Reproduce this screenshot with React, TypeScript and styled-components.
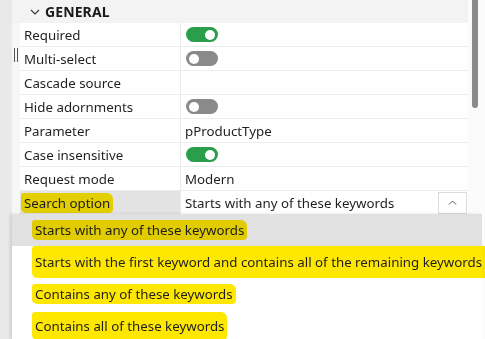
import React from "react";
import styled, { createGlobalStyle } from "styled-components";

const Global = createGlobalStyle`
  html, body { margin: 0; padding: 0; background: #fff; }
  body { font-family: "Noto Sans", "Open Sans", sans-serif; color: #1f1f1f; }
`;

const Page = styled.div`
  position: relative;
  width: 485px;
  height: 339px;
  overflow: hidden;
  display: flex;
  background: #fff;
`;

const LeftRail = styled.div`
  width: 12px;
  flex: none;
  background: #e9e9e9;
`;

const Content = styled.div`
  width: 456px;
  flex: none;
  background: #f7f7f7;
  display: flex;
  flex-direction: column;
`;

const ScrollTrack = styled.div`
  width: 17px;
  flex: none;
  background: #fbfbfb;
  padding-left: 4px;
  box-sizing: border-box;
`;

const ScrollThumb = styled.div`
  width: 6px;
  height: 108px;
  background: #8b8b8b;
  border-radius: 0 0 3px 3px;
`;

const Header = styled.div`
  height: 23px;
  background: #f3f3f3;
  display: flex;
  align-items: center;
  padding-left: 18px;
  gap: 5px;
  font-size: 14px;
  font-weight: 700;
  letter-spacing: 0.1px;
  color: #1a1a1a;
`;

const Row = styled.div`
  margin-left: 8px;
  height: 24px;
  display: grid;
  grid-template-columns: 161px 1fr;
  box-sizing: border-box;
  border-bottom: 1px solid #ececec;
  background: #fff;
`;

const Label = styled.div<{ $selected?: boolean }>`
  display: flex;
  align-items: center;
  padding-left: 4px;
  font-size: 13.3px;
  background: ${(p) => (p.$selected ? "#e3e3e3" : "#fff")};
  border-right: 1px solid #ececec;
`;

const Value = styled.div`
  display: flex;
  align-items: center;
  padding-left: 4px;
  font-size: 13.3px;
  justify-content: space-between;
`;

const Toggle = styled.div<{ $on: boolean }>`
  width: 32px;
  height: 15px;
  border-radius: 8px;
  margin-left: 1px;
  background: ${(p) => (p.$on ? "#2a9e4b" : "#8a8a8a")};
  position: relative;
  &::after {
    content: "";
    position: absolute;
    top: 2.5px;
    left: ${(p) => (p.$on ? "19px" : "3px")};
    width: 10px;
    height: 10px;
    border-radius: 50%;
    background: #fff;
  }
`;

const SelectButton = styled.div`
  width: 29px;
  height: 22px;
  box-sizing: border-box;
  border: 1px solid #dcdcdc;
  background: #fff;
  display: flex;
  align-items: center;
  justify-content: center;
  margin-right: 1px;
`;

const Marker = styled.span<{ $pad?: string }>`
  background: #ffe800;
  mix-blend-mode: multiply;
  padding: ${(p) => p.$pad || "1px 3px"};
  border-radius: 3px 6px 4px 5px;
  margin-left: -3px;
`;

const Grip = styled.div`
  position: absolute;
  left: 14px;
  top: 48px;
  width: 4px;
  height: 14px;
  border-left: 1.5px solid #555;
  border-right: 1.5px solid #555;
  box-sizing: border-box;
`;

const Menu = styled.div`
  position: absolute;
  left: 12px;
  top: 214px;
  width: 470px;
  height: 125px;
  background: #fff;
  box-shadow: -2px 0 3px rgba(0, 0, 0, 0.12);
  display: flex;
  flex-direction: column;
`;

const MenuItem = styled.div<{ $active?: boolean }>`
  height: 32px;
  flex: none;
  display: flex;
  align-items: center;
  padding-left: 23px;
  font-size: 13.3px;
  white-space: nowrap;
  background: ${(p) => (p.$active ? "#e1e1e1" : "#fff")};
`;

const Chevron = () => (
  <svg width="10" height="6" viewBox="0 0 10 6">
    <path d="M1 1l4 4 4-4" fill="none" stroke="#333" strokeWidth="1.1" />
  </svg>
);

const CaretUp = () => (
  <svg width="9" height="5" viewBox="0 0 9 5">
    <path d="M1 4.5l3.5-3.5 3.5 3.5" fill="none" stroke="#555" strokeWidth="1" />
  </svg>
);

type RowDef = { label: string; toggle?: boolean; text?: string };

const rows: RowDef[] = [
  { label: "Required", toggle: true },
  { label: "Multi-select", toggle: false },
  { label: "Cascade source" },
  { label: "Hide adornments", toggle: false },
  { label: "Parameter", text: "pProductType" },
  { label: "Case insensitive", toggle: true },
  { label: "Request mode", text: "Modern" },
];

export default function App() {
  return (
    <Page>
      <Global />
      <LeftRail />
      <Content>
        <Header>
          <Chevron />
          GENERAL
        </Header>
        {rows.map((r) => (
          <Row key={r.label}>
            <Label>{r.label}</Label>
            <Value>
              {r.toggle !== undefined ? <Toggle $on={r.toggle} /> : r.text}
            </Value>
          </Row>
        ))}
        <Row>
          <Label $selected>
            <Marker>Search option</Marker>
          </Label>
          <Value>
            Starts with any of these keywords
            <SelectButton>
              <CaretUp />
            </SelectButton>
          </Value>
        </Row>
      </Content>
      <ScrollTrack>
        <ScrollThumb />
      </ScrollTrack>
      <Grip />
      <Menu>
        <MenuItem $active>
          <Marker>Starts with any of these keywords</Marker>
        </MenuItem>
        <MenuItem>
          <Marker $pad="7px 8px 7px 3px">
            Starts with the first keyword and contains all of the remaining keywords
          </Marker>
        </MenuItem>
        <MenuItem>
          <Marker>Contains any of these keywords</Marker>
        </MenuItem>
        <MenuItem>
          <Marker $pad="5px 3px">Contains all of these keywords</Marker>
        </MenuItem>
      </Menu>
    </Page>
  );
}
